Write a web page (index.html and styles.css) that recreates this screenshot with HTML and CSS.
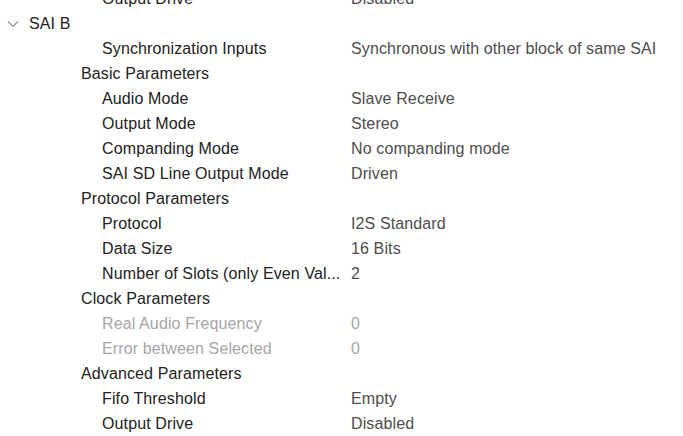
FILE: index.html
```html
<!DOCTYPE html>
<html>
<head>
<meta charset="utf-8">
<link rel="stylesheet" href="styles.css">
</head>
<body>
<div class="tree">
  <div class="row"><div class="name l2">Output Drive</div><div class="value">Disabled</div></div>
  <div class="row"><div class="name l0"><svg class="chev" width="12" height="12" viewBox="0 0 12 12"><path d="M1 3.5 L6 8.5 L11 3.5" fill="none" stroke="#8a8a8a" stroke-width="1.1"/></svg><span>SAI B</span></div><div class="value"></div></div>
  <div class="row"><div class="name l2">Synchronization Inputs</div><div class="value">Synchronous with other block of same SAI</div></div>
  <div class="row"><div class="name l1">Basic Parameters</div><div class="value"></div></div>
  <div class="row"><div class="name l2">Audio Mode</div><div class="value">Slave Receive</div></div>
  <div class="row"><div class="name l2">Output Mode</div><div class="value">Stereo</div></div>
  <div class="row"><div class="name l2">Companding Mode</div><div class="value">No companding mode</div></div>
  <div class="row"><div class="name l2">SAI SD Line Output Mode</div><div class="value">Driven</div></div>
  <div class="row"><div class="name l1">Protocol Parameters</div><div class="value"></div></div>
  <div class="row"><div class="name l2">Protocol</div><div class="value">I2S Standard</div></div>
  <div class="row"><div class="name l2">Data Size</div><div class="value">16 Bits</div></div>
  <div class="row"><div class="name l2">Number of Slots (only Even Val...</div><div class="value">2</div></div>
  <div class="row"><div class="name l1">Clock Parameters</div><div class="value"></div></div>
  <div class="row disabled"><div class="name l2">Real Audio Frequency</div><div class="value">0</div></div>
  <div class="row disabled"><div class="name l2">Error between Selected</div><div class="value">0</div></div>
  <div class="row"><div class="name l1">Advanced Parameters</div><div class="value"></div></div>
  <div class="row"><div class="name l2">Fifo Threshold</div><div class="value">Empty</div></div>
  <div class="row"><div class="name l2">Output Drive</div><div class="value">Disabled</div></div>
</div>
</body>
</html>
```
FILE: styles.css
```css
html, body {
  margin: 0;
  padding: 0;
  background: #ffffff;
  overflow: hidden;
}
body {
  font-family: "Liberation Sans", Arial, sans-serif;
  font-size: 16px;
  letter-spacing: 0.12px;
  color: #222222;
}
.tree {
  margin-top: -14px;
}
.row {
  display: flex;
  height: 25px;
  align-items: center;
}
.name {
  width: 351px;
  flex: 0 0 351px;
  box-sizing: border-box;
  padding-right: 4px;
  white-space: nowrap;
  overflow: hidden;
  color: #222222;
}
.name.l0 {
  padding-left: 7px;
  display: flex;
  align-items: center;
}
.chev {
  margin-right: 10px;
  flex: 0 0 auto;
}
.name.l1 { padding-left: 81px; }
.name.l2 { padding-left: 102px; }
.value {
  color: #4d4d4d;
  white-space: nowrap;
}
.disabled .name,
.disabled .value {
  color: #a6a6a6;
}
```
